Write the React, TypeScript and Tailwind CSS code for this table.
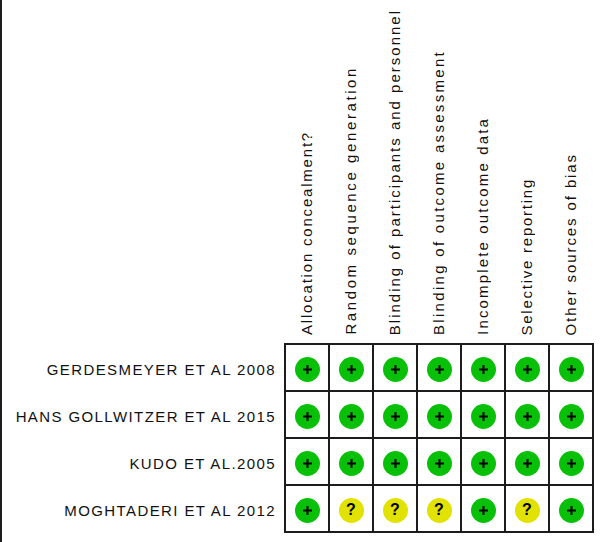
import React from "react";

const domains: { label: string; track: string }[] = [
  { label: "Allocation concealment?", track: "tracking-[1.8px]" },
  { label: "Random sequence generation", track: "tracking-[2.6px]" },
  { label: "Blinding of participants and personnel", track: "tracking-[2px]" },
  { label: "Blinding of outcome assessment", track: "tracking-[2.3px]" },
  { label: "Incomplete outcome data", track: "tracking-[2.15px]" },
  { label: "Selective reporting", track: "tracking-[1.75px]" },
  { label: "Other sources of bias", track: "tracking-[1.9px]" },
];

const studies: { name: string; marks: string }[] = [
  { name: "GERDESMEYER ET AL 2008", marks: "+++++++" },
  { name: "HANS GOLLWITZER ET AL 2015", marks: "+++++++" },
  { name: "KUDO ET AL.2005", marks: "+++++++" },
  { name: "MOGHTADERI ET AL 2012", marks: "+???+?+" },
];

function Mark({ kind }: { kind: string }) {
  if (kind === "?") {
    return (
      <div className="w-[25px] h-[25px] rounded-full bg-[#e2e200] flex items-center justify-center text-[16px] font-bold leading-none text-black">
        ?
      </div>
    );
  }
  return (
    <div className="w-[25px] h-[25px] rounded-full bg-[#08c008] flex items-center justify-center">
      <svg width="9" height="9" viewBox="0 0 9 9">
        <rect x="3.5" y="0" width="2" height="9" fill="#000" />
        <rect x="0" y="3.5" width="9" height="2" fill="#000" />
      </svg>
    </div>
  );
}

export default function App() {
  return (
    <div
      className="w-[600px] h-[542px] bg-white border-l-2 border-[#1c1c1c] text-[#111] overflow-hidden"
      style={{ fontFamily: '"Liberation Sans", Arial, sans-serif' }}
    >
      {/* column headers */}
      <div className="flex h-[343px] items-end">
        <div className="w-[282px] shrink-0" />
        {domains.map((d) => (
          <div key={d.label} className="w-[44px] shrink-0 flex justify-center pb-[8px]">
            <span
              className={`[writing-mode:vertical-rl] rotate-180 text-[15px] whitespace-nowrap leading-none ${d.track}`}
            >
              {d.label}
            </span>
          </div>
        ))}
      </div>

      {/* study rows */}
      <div className="flex">
        <div className="w-[282px] shrink-0 flex flex-col pt-[2px]">
          {studies.map((s) => (
            <div
              key={s.name}
              className="h-[47px] flex items-center justify-end pr-[8px] pt-[4px] text-[15px] tracking-[1.4px] whitespace-nowrap"
            >
              {s.name}
            </div>
          ))}
        </div>
        <div className="border-l-2 border-t-2 border-[#1c1c1c]">
          {studies.map((s) => (
            <div key={s.name} className="flex">
              {s.marks.split("").map((m, i) => (
                <div
                  key={i}
                  className="w-[44px] h-[47px] border-r-2 border-b-2 border-[#1c1c1c] flex items-center justify-center pt-[3px]"
                >
                  <Mark kind={m} />
                </div>
              ))}
            </div>
          ))}
        </div>
      </div>
    </div>
  );
}
